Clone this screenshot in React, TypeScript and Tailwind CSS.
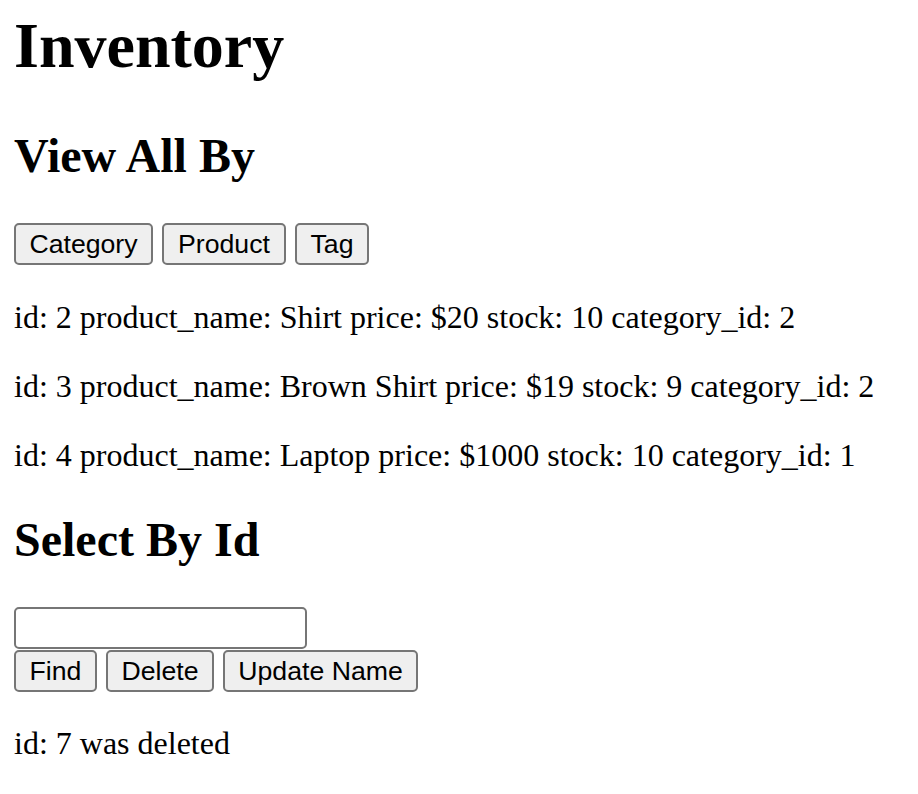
const products = [
  { id: 2, product_name: 'Shirt', price: 20, stock: 10, category_id: 2 },
  { id: 3, product_name: 'Brown Shirt', price: 19, stock: 9, category_id: 2 },
  { id: 4, product_name: 'Laptop', price: 1000, stock: 10, category_id: 1 },
];

const buttonClass =
  'flex h-[42px] items-center justify-center rounded-[5px] border-2 border-[#767676] bg-[#efefef] text-[26.67px] text-black';

export default function App() {
  return (
    <main className="min-h-screen bg-white px-[14px] font-['Liberation_Serif','Times_New_Roman',serif] text-black">
      <h1 className="pt-[9px] text-[64px] font-bold leading-[74px]">Inventory</h1>

      <h2 className="mt-[45px] text-[48px] font-bold leading-[55px]">View All By</h2>

      <div className="mt-[40px] flex gap-[9px] font-['Liberation_Sans',Arial,sans-serif]">
        <button className={`${buttonClass} w-[139px]`}>Category</button>
        <button className={`${buttonClass} w-[124px]`}>Product</button>
        <button className={`${buttonClass} w-[74px]`}>Tag</button>
      </div>

      <div className="mt-[34px] flex flex-col gap-[32px]">
        {products.map((p) => (
          <p key={p.id} className="text-[32px] leading-[37px]">
            id: {p.id} product_name: {p.product_name} price: ${p.price} stock: {p.stock} category_id:{' '}
            {p.category_id}
          </p>
        ))}
      </div>

      <h2 className="mt-[38px] text-[48px] font-bold leading-[55px]">Select By Id</h2>

      <input
        type="text"
        className="mt-[40px] block h-[42px] w-[293px] rounded-[5px] border-2 border-[#767676] bg-white"
      />

      <div className="mt-[1px] flex gap-[9px] font-['Liberation_Sans',Arial,sans-serif]">
        <button className={`${buttonClass} w-[83px]`}>Find</button>
        <button className={`${buttonClass} w-[108px]`}>Delete</button>
        <button className={`${buttonClass} w-[195px]`}>Update Name</button>
      </div>

      <p className="mt-[33px] text-[32px] leading-[37px]">id: 7 was deleted</p>
    </main>
  );
}
